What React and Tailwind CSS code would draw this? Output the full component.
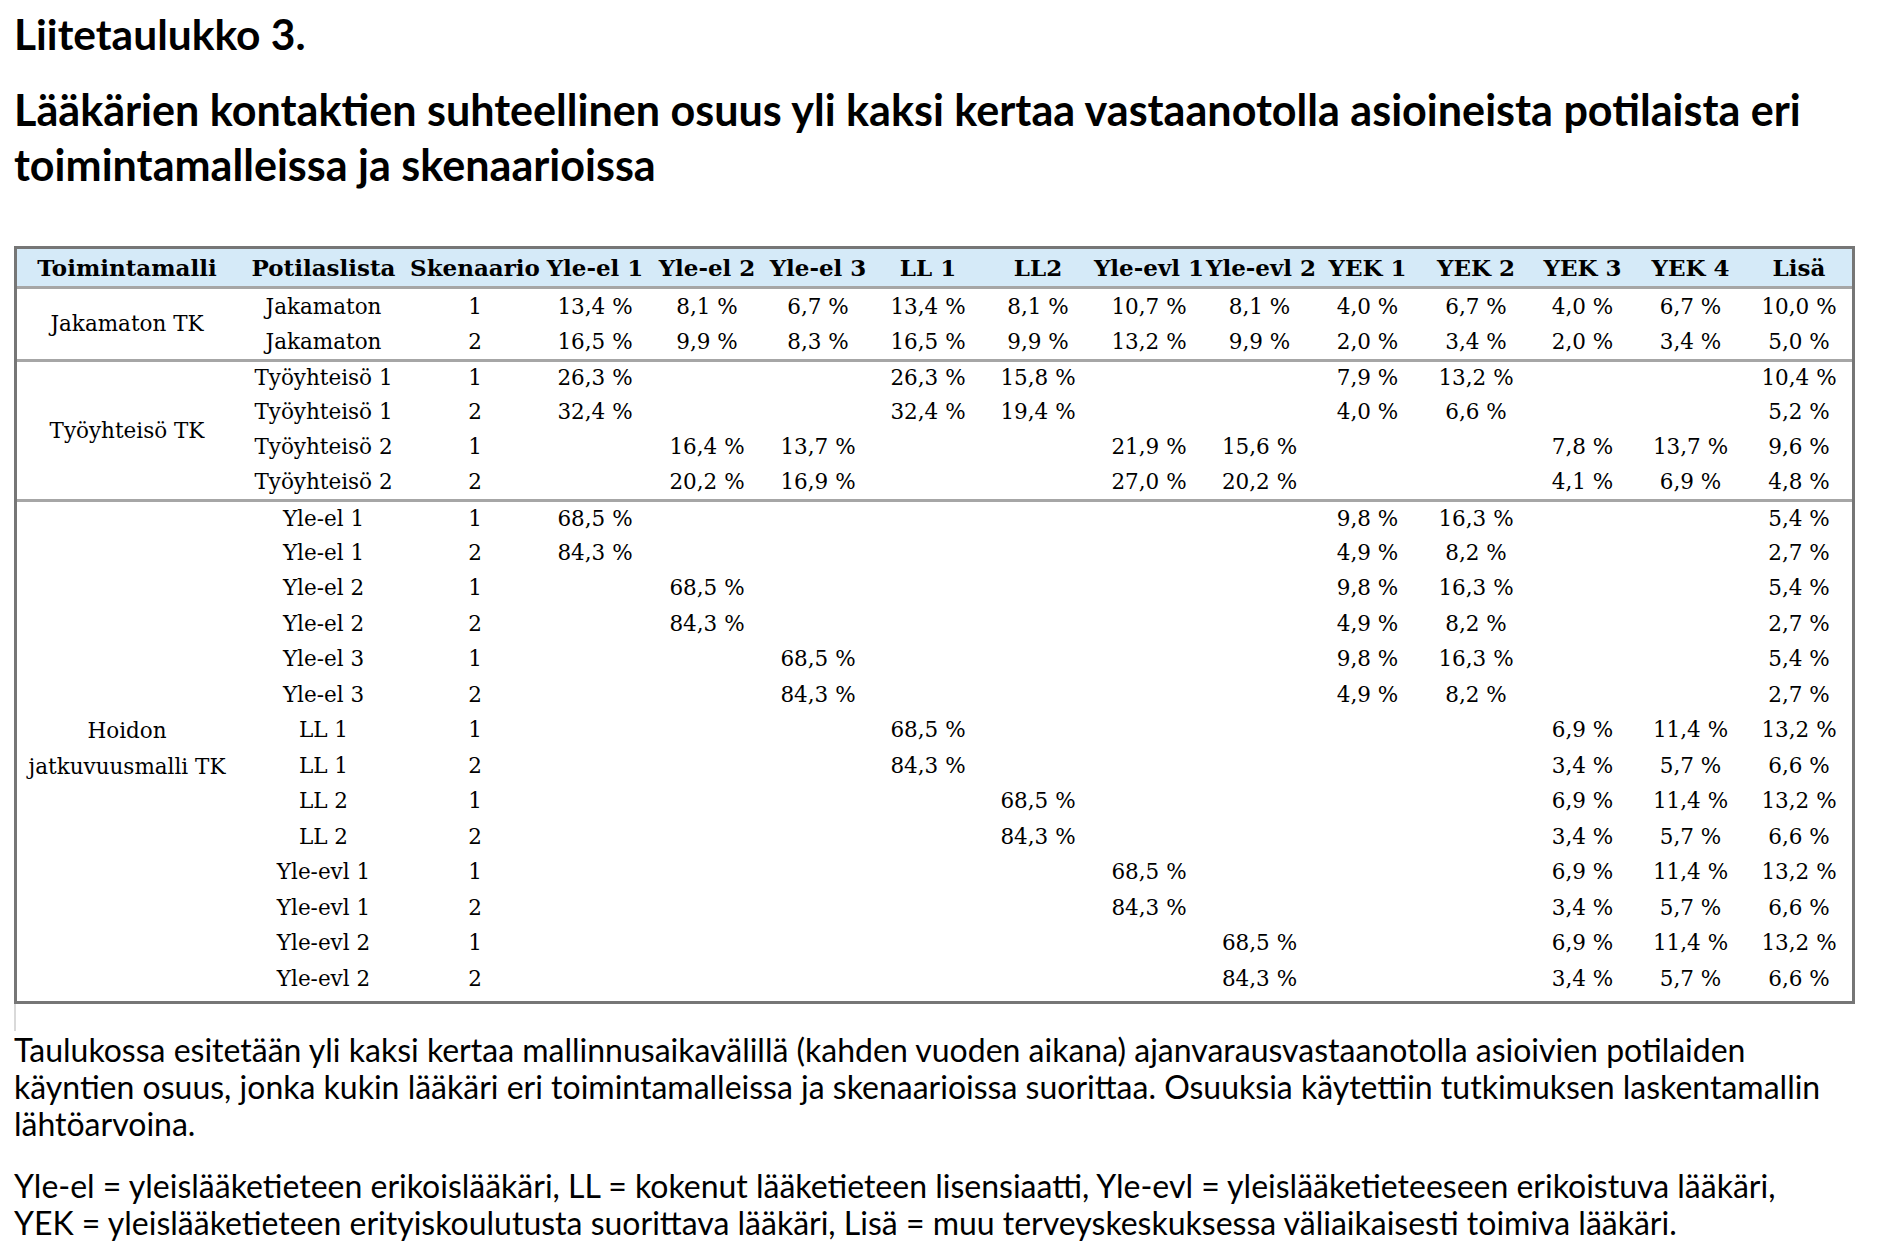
const HEAD = [
  "Toimintamalli",
  "Potilaslista",
  "Skenaario",
  "Yle-el 1",
  "Yle-el 2",
  "Yle-el 3",
  "LL 1",
  "LL2",
  "Yle-evl 1",
  "Yle-evl 2",
  "YEK 1",
  "YEK 2",
  "YEK 3",
  "YEK 4",
  "Lisä",
];

const COLS = [220, 173, 130, 110, 114, 108, 112, 108, 114, 107, 109, 108, 105, 111, 106];

// each row: [potilaslista, skenaario, ...12 values]
const GROUPS = [
  {
    label: ["Jakamaton TK"],
    rowH: "h-[35px]",
    rows: [
      ["Jakamaton", "1", "13,4 %", "8,1 %", "6,7 %", "13,4 %", "8,1 %", "10,7 %", "8,1 %", "4,0 %", "6,7 %", "4,0 %", "6,7 %", "10,0 %"],
      ["Jakamaton", "2", "16,5 %", "9,9 %", "8,3 %", "16,5 %", "9,9 %", "13,2 %", "9,9 %", "2,0 %", "3,4 %", "2,0 %", "3,4 %", "5,0 %"],
    ],
  },
  {
    label: ["Työyhteisö TK"],
    rowH: "h-[35px]",
    rows: [
      ["Työyhteisö 1", "1", "26,3 %", "", "", "26,3 %", "15,8 %", "", "", "7,9 %", "13,2 %", "", "", "10,4 %"],
      ["Työyhteisö 1", "2", "32,4 %", "", "", "32,4 %", "19,4 %", "", "", "4,0 %", "6,6 %", "", "", "5,2 %"],
      ["Työyhteisö 2", "1", "", "16,4 %", "13,7 %", "", "", "21,9 %", "15,6 %", "", "", "7,8 %", "13,7 %", "9,6 %"],
      ["Työyhteisö 2", "2", "", "20,2 %", "16,9 %", "", "", "27,0 %", "20,2 %", "", "", "4,1 %", "6,9 %", "4,8 %"],
    ],
  },
  {
    label: ["Hoidon", "jatkuvuusmalli TK"],
    rowH: "h-[35.5px]",
    rows: [
      ["Yle-el 1", "1", "68,5 %", "", "", "", "", "", "", "9,8 %", "16,3 %", "", "", "5,4 %"],
      ["Yle-el 1", "2", "84,3 %", "", "", "", "", "", "", "4,9 %", "8,2 %", "", "", "2,7 %"],
      ["Yle-el 2", "1", "", "68,5 %", "", "", "", "", "", "9,8 %", "16,3 %", "", "", "5,4 %"],
      ["Yle-el 2", "2", "", "84,3 %", "", "", "", "", "", "4,9 %", "8,2 %", "", "", "2,7 %"],
      ["Yle-el 3", "1", "", "", "68,5 %", "", "", "", "", "9,8 %", "16,3 %", "", "", "5,4 %"],
      ["Yle-el 3", "2", "", "", "84,3 %", "", "", "", "", "4,9 %", "8,2 %", "", "", "2,7 %"],
      ["LL 1", "1", "", "", "", "68,5 %", "", "", "", "", "", "6,9 %", "11,4 %", "13,2 %"],
      ["LL 1", "2", "", "", "", "84,3 %", "", "", "", "", "", "3,4 %", "5,7 %", "6,6 %"],
      ["LL 2", "1", "", "", "", "", "68,5 %", "", "", "", "", "6,9 %", "11,4 %", "13,2 %"],
      ["LL 2", "2", "", "", "", "", "84,3 %", "", "", "", "", "3,4 %", "5,7 %", "6,6 %"],
      ["Yle-evl 1", "1", "", "", "", "", "", "68,5 %", "", "", "", "6,9 %", "11,4 %", "13,2 %"],
      ["Yle-evl 1", "2", "", "", "", "", "", "84,3 %", "", "", "", "3,4 %", "5,7 %", "6,6 %"],
      ["Yle-evl 2", "1", "", "", "", "", "", "", "68,5 %", "", "", "6,9 %", "11,4 %", "13,2 %"],
      ["Yle-evl 2", "2", "", "", "", "", "", "", "84,3 %", "", "", "3,4 %", "5,7 %", "6,6 %"],
    ],
  },
];

const App = () => {
  return (
    <div className="min-h-screen bg-white text-black pl-[14px] pt-[6px] font-['Lato',sans-serif]">
      {/* TITLES */}
      <h1 className="text-[42.5px] font-bold leading-[55px]">Liitetaulukko 3.</h1>
      <h2 className="mt-[21px] text-[43.1px] font-bold leading-[55px] whitespace-nowrap">
        Lääkärien kontaktien suhteellinen osuus yli kaksi kertaa vastaanotolla asioineista potilaista eri
        <br />
        toimintamalleissa ja skenaarioissa
      </h2>

      {/* TABLE */}
      <table className="mt-[54px] table-fixed w-[1841px] border-separate border-spacing-0 border-[3px] border-[#767676] font-['DejaVu_Serif',serif] text-[21.5px] leading-none">
        <colgroup>
          {COLS.map((w, i) => (
            <col key={i} style={{ width: w }} />
          ))}
        </colgroup>
        <thead>
          <tr className="h-[40px]">
            {HEAD.map((h) => (
              <th
                key={h}
                className="p-0 bg-[#d5eaf8] border-b-[3px] border-[#a6a6a6] text-[23px] font-bold text-center whitespace-nowrap"
              >
                {h}
              </th>
            ))}
          </tr>
        </thead>
        <tbody>
          {GROUPS.map((g, gi) =>
            g.rows.map((r, ri) => {
              const sep = gi > 0 && ri === 0;
              const cell = sep
                ? "p-0 text-center whitespace-nowrap border-t-[3px] border-[#a6a6a6]"
                : "p-0 text-center whitespace-nowrap";
              return (
                <tr key={gi + "-" + ri} className={g.rowH}>
                  {ri === 0 && (
                    <td rowSpan={g.rows.length} className={cell + " leading-[36px]"}>
                      {g.label.map((l) => (
                        <div key={l}>{l}</div>
                      ))}
                    </td>
                  )}
                  {r.map((v, ci) => (
                    <td key={ci} className={cell}>
                      {v}
                    </td>
                  ))}
                </tr>
              );
            }),
          )}
          <tr className="h-[5px]">
            <td colSpan={15} className="p-0"></td>
          </tr>
        </tbody>
      </table>

      <div className="w-[2px] h-[27px] bg-[#d9d9d9]"></div>

      {/* NOTES */}
      <div className="text-[32px] leading-[37px] whitespace-nowrap">
        <p>
          Taulukossa esitetään yli kaksi kertaa mallinnusaikavälillä (kahden vuoden aikana) ajanvarausvastaanotolla asioivien potilaiden
          <br />
          käyntien osuus, jonka kukin lääkäri eri toimintamalleissa ja skenaarioissa suorittaa. Osuuksia käytettiin tutkimuksen laskentamallin
          <br />
          lähtöarvoina.
        </p>
        <p className="mt-[25px]">
          Yle-el = yleislääketieteen erikoislääkäri, LL = kokenut lääketieteen lisensiaatti, Yle-evl = yleislääketieteeseen erikoistuva lääkäri,
          <br />
          YEK = yleislääketieteen erityiskoulutusta suorittava lääkäri, Lisä = muu terveyskeskuksessa väliaikaisesti toimiva lääkäri.
        </p>
      </div>
    </div>
  );
};

export default App;
